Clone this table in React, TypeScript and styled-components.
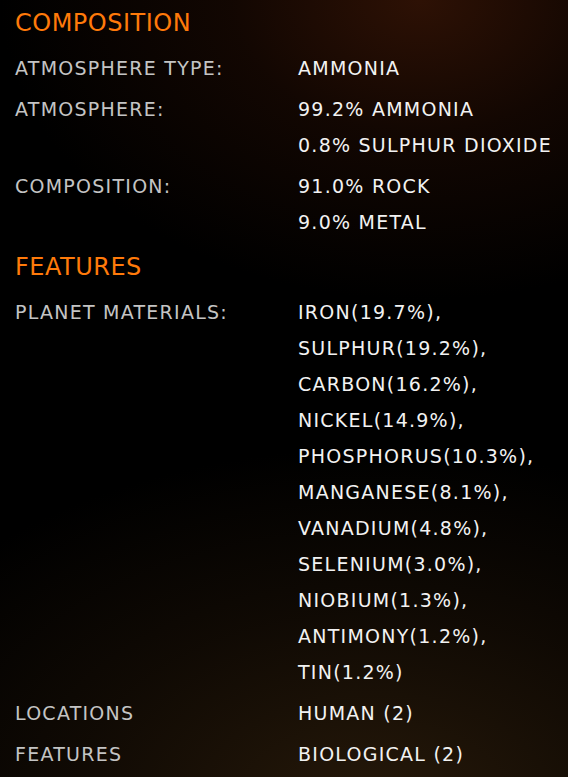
import { createGlobalStyle } from "styled-components";
import styled from "styled-components";

const GlobalStyle = createGlobalStyle`
  html, body {
    margin: 0;
    padding: 0;
    background: #000;
  }
  * {
    box-sizing: border-box;
  }
`;

type Row = {
  label: string;
  values: string[];
};

type Section = {
  title: string;
  rows: Row[];
};

const SECTIONS: Section[] = [
  {
    title: "COMPOSITION",
    rows: [
      { label: "ATMOSPHERE TYPE:", values: ["AMMONIA"] },
      { label: "ATMOSPHERE:", values: ["99.2% AMMONIA", "0.8% SULPHUR DIOXIDE"] },
      { label: "COMPOSITION:", values: ["91.0% ROCK", "9.0% METAL"] },
    ],
  },
  {
    title: "FEATURES",
    rows: [
      {
        label: "PLANET MATERIALS:",
        values: [
          "IRON(19.7%),",
          "SULPHUR(19.2%),",
          "CARBON(16.2%),",
          "NICKEL(14.9%),",
          "PHOSPHORUS(10.3%),",
          "MANGANESE(8.1%),",
          "VANADIUM(4.8%),",
          "SELENIUM(3.0%),",
          "NIOBIUM(1.3%),",
          "ANTIMONY(1.2%),",
          "TIN(1.2%)",
        ],
      },
      { label: "LOCATIONS", values: ["HUMAN (2)"] },
      { label: "FEATURES", values: ["BIOLOGICAL (2)"] },
    ],
  },
];

const Panel = styled.div`
  width: 568px;
  height: 777px;
  overflow: hidden;
  padding: 4.5px 15px 0 15px;
  background:
    radial-gradient(ellipse 420px 300px at 74% 0%, rgba(48, 18, 5, 0.95) 0%, rgba(30, 11, 3, 0.6) 45%, rgba(0, 0, 0, 0) 100%),
    radial-gradient(ellipse 560px 360px at 66% 104%, rgba(40, 26, 10, 0.95) 0%, rgba(26, 16, 6, 0.6) 55%, rgba(0, 0, 0, 0) 100%),
    #000;
  font-family: "DejaVu Sans", "Liberation Sans", sans-serif;
  display: flex;
  flex-direction: column;
`;

const Heading = styled.h2`
  margin: 0;
  font-size: 24px;
  line-height: 36px;
  font-weight: 400;
  letter-spacing: 0.5px;
  color: #ff7a0a;
`;

const SectionBlock = styled.section`
  display: flex;
  flex-direction: column;
  gap: 9px;

  & + & {
    margin-top: 9px;
  }
`;

const List = styled.dl`
  margin: 0;
  display: flex;
  flex-direction: column;
  gap: 5px;
`;

const Item = styled.div`
  display: grid;
  grid-template-columns: 283px 1fr;
  font-size: 19px;
  line-height: 36px;
  letter-spacing: 1.25px;
`;

const Label = styled.dt`
  margin: 0;
  color: #c4c4c4;
`;

const Values = styled.dd`
  margin: 0;
  color: #f2f2f2;
  display: flex;
  flex-direction: column;
`;

export default function App() {
  return (
    <>
      <GlobalStyle />
      <Panel>
        {SECTIONS.map(section => (
          <SectionBlock key={section.title}>
            <Heading>{section.title}</Heading>
            <List>
              {section.rows.map(row => (
                <Item key={row.label}>
                  <Label>{row.label}</Label>
                  <Values>
                    {row.values.map(v => (
                      <span key={v}>{v}</span>
                    ))}
                  </Values>
                </Item>
              ))}
            </List>
          </SectionBlock>
        ))}
      </Panel>
    </>
  );
}
